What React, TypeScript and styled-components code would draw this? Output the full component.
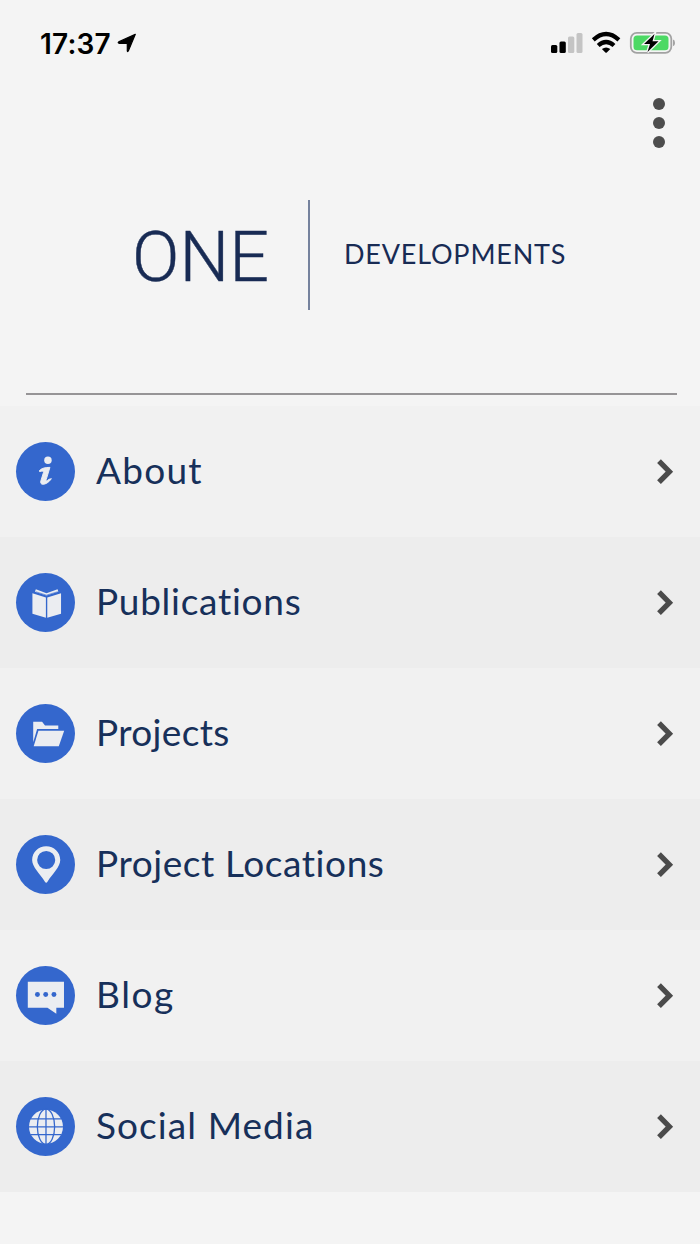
import React from "react";
import styled, { createGlobalStyle } from "styled-components";

const GlobalStyle = createGlobalStyle`
  * { box-sizing: border-box; }
  body { margin: 0; background: #f4f4f4; }
`;

const Screen = styled.div`
  width: 700px;
  height: 1244px;
  display: flex;
  flex-direction: column;
  background: #f4f4f4;
  overflow: hidden;
`;

const StatusBar = styled.header`
  height: 86px;
  padding: 0 24px 0 40px;
  display: flex;
  align-items: center;
  justify-content: space-between;
`;

const StatusGroup = styled.div`
  display: flex;
  align-items: center;
`;

const Clock = styled.span`
  font: 600 28px/32px Inter, sans-serif;
  letter-spacing: 0.2px;
  color: #000;
  margin: 1px 6px 0 0;
`;

const Toolbar = styled.div`
  height: 74px;
  padding: 12px 35px 0 0;
  display: flex;
  justify-content: flex-end;
`;

const MenuButton = styled.button`
  width: 12px;
  height: 50px;
  padding: 0;
  border: 0;
  background: none;
  display: flex;
  flex-direction: column;
  justify-content: space-between;
`;

const Dot = styled.span`
  width: 12px;
  height: 12px;
  border-radius: 50%;
  background: #4d4d4d;
`;

const Brand = styled.div`
  height: 233px;
  padding: 40px 0 0 132px;
  display: flex;
  align-items: flex-start;
  color: #182b54;
`;

const BrandName = styled.h1`
  margin: 0;
  width: 176px;
  font: 300 70px/114px Roboto, sans-serif;
  letter-spacing: 0;
  -webkit-text-stroke: 0.4px #182b54;
`;

const BrandRule = styled.span`
  width: 2px;
  height: 110px;
  margin-right: 34px;
  background: #75829d;
`;

const BrandSub = styled.span`
  font: 400 27px/108px Lato, sans-serif;
  letter-spacing: 0.8px;
  white-space: nowrap;
`;

const Divider = styled.hr`
  width: 651px;
  height: 2px;
  margin: 0 0 11px 26px;
  border: 0;
  flex: none;
  background: #969496;
`;

const List = styled.nav`
  display: flex;
  flex-direction: column;
`;

const Row = styled.a`
  height: 131px;
  padding: 0 26px 0 15.5px;
  display: flex;
  align-items: center;
  background: #f1f1f1;
  &:nth-child(even) { background: #ededed; }
`;

const Badge = styled.span`
  width: 59px;
  height: 59px;
  margin-right: 21.5px;
  flex: none;
  border-radius: 50%;
  background: #3467cd;
  display: flex;
`;

const Label = styled.span<{ $spacing: number }>`
  flex: 1;
  padding-bottom: 4px;
  font: 400 37px/46px Lato, sans-serif;
  letter-spacing: ${(p) => p.$spacing}px;
  color: #17305a;
  white-space: nowrap;
`;

const ink = "#ebedf1";
const blue = "#3467cd";

const InfoGlyph = () => (
  <svg width="59" height="59" viewBox="0 0 60 60" fill={ink}>
    <circle cx="32.500" cy="18.500" r="3.800" />
    <path stroke={ink} strokeWidth="1" strokeLinejoin="round" d="M23.500 29.500C26 26.500 30 25.800 34.500 25.800L30.700 38.200C30.200 40 31.200 40 33.500 38L36 37.300C33.500 41 30 43 27.500 43C25.200 43 24.800 41.500 25.300 39.500L28 30.800C28.300 29.300 27 29.500 24 30Z" />
  </svg>
);

const BookGlyph = () => (
  <svg width="59" height="59" viewBox="0 0 60 60" fill={ink}>
    <path d="M16.700 20.500L30.400 24.800V45.500L16.700 41.500Z M31.800 24.800L45.800 20.500V41.500L31.800 45.500Z" />
    <path d="M20.200 16.600L31 20.700L42.300 16.600L43 19L31 23L19.200 19Z" />
    <path d="M20 19L31 22.500L42.500 19" stroke={blue} strokeWidth=".6" fill="none" />
  </svg>
);

const FolderGlyph = () => (
  <svg width="59" height="59" viewBox="0 0 60 60" fill={ink}>
    <path d="M17.500 18H26.500L29.500 21.800H43V25.500H21.500L17.500 39Z" />
    <path d="M22.800 27.200H49L43.500 43H18Z" />
  </svg>
);

const PinGlyph = () => (
  <svg width="59" height="59" viewBox="0 0 60 60">
    <path fill={ink} fillRule="evenodd" d="M30.700 11.500C38.600 11.500 45 17.500 45 25.500C45 32.500 37.500 39 32 47.500Q30.700 49.500 29.400 47.500C24 39 16.400 32.500 16.400 25.500C16.400 17.500 22.800 11.500 30.700 11.500ZM30.700 16.200A9.200 9.200 0 1 0 30.700 34.600A9.200 9.200 0 1 0 30.700 16.200Z" />
  </svg>
);

const ChatGlyph = () => (
  <svg width="59" height="59" viewBox="0 0 60 60">
    <path fill={ink} d="M12 16H48.800V42.500H41V48.500L32 42.500H12Z" />
    <g fill={blue}>
      <circle cx="21.800" cy="29" r="2.500" />
      <circle cx="30.200" cy="29" r="2.500" />
      <circle cx="38.600" cy="29" r="2.500" />
    </g>
  </svg>
);

const GlobeGlyph = () => (
  <svg width="59" height="59" viewBox="0 0 60 60">
    <circle cx="30.500" cy="30.300" r="17.300" fill={ink} />
    <g fill="none" stroke={blue} strokeWidth="1.300">
      <path d="M30.500 12V48M15 22.300H46M12 30.300H49M15 38.300H46" />
      <ellipse cx="30.500" cy="30.300" rx="8.800" ry="18" />
    </g>
  </svg>
);

const Chevron = () => (
  <svg width="18" height="26" viewBox="0 0 18 26">
    <path d="M3 2.200L13.400 12.700L3 23.200" fill="none" stroke="#4b4b4b" strokeWidth="5.300" />
  </svg>
);

const LocationArrow = () => (
  <svg width="20" height="20" viewBox="0 0 20 20">
    <path d="M18.300 1.300L11.300 18Q10.500 19.200 10.300 17.800V10.300H2Q.5 9.700 1.700 8.900Z" fill="#000" stroke="#000" strokeWidth="1.200" strokeLinejoin="round" />
  </svg>
);

const StatusIcons = () => (
  <svg width="126" height="26" viewBox="0 0 126 26">
    <rect x="1" y="15" width="6.300" height="8" rx="1.500" />
    <rect x="9.500" y="11.500" width="6.300" height="11.500" rx="1.500" />
    <rect x="18" y="6.500" width="6.300" height="16.500" rx="1.500" fill="#c4c4c4" />
    <rect x="26.500" y="3" width="6" height="20" rx="1.500" fill="#c4c4c4" />
    <g fill="none" stroke="#000" strokeWidth="4.200">
      <path d="M43.300 9.900Q56.100-1.800 68.900 9.900" />
      <path d="M48.200 15.500Q56.100 8.400 64 15.500" />
    </g>
    <path d="M51.900 19Q56.100 15.800 60.300 19L56.800 22.600Q56.100 23.100 55.400 22.600Z" />
    <rect x="80.800" y="2.800" width="40.500" height="20" rx="6" fill="none" stroke="#a2a2a2" strokeWidth="1.800" />
    <rect x="83.500" y="5.400" width="35" height="14.800" rx="3.500" fill="#4cd964" />
    <path d="M123 9.500Q125 9.800 125 12.800T123 16Z" fill="#a2a2a2" />
    <path d="M104.500 4L94 14H100L97.500 22L108.500 11.300H102.500Z" fill="#000" stroke="#f4f4f4" strokeWidth="2.600" paintOrder="stroke" />
  </svg>
);

const items = [
  { label: "About", icon: <InfoGlyph />, spacing: 1.25 },
  { label: "Publications", icon: <BookGlyph />, spacing: 0.73 },
  { label: "Projects", icon: <FolderGlyph />, spacing: 0.35 },
  { label: "Project Locations", icon: <PinGlyph />, spacing: 0.58 },
  { label: "Blog", icon: <ChatGlyph />, spacing: 1.6 },
  { label: "Social Media", icon: <GlobeGlyph />, spacing: 1.08 },
];

export default function App() {
  return (
    <Screen>
      <GlobalStyle />
      <StatusBar>
        <StatusGroup>
          <Clock>17:37</Clock>
          <LocationArrow />
        </StatusGroup>
        <StatusIcons />
      </StatusBar>
      <Toolbar>
        <MenuButton aria-label="Menu">
          <Dot />
          <Dot />
          <Dot />
        </MenuButton>
      </Toolbar>
      <Brand>
        <BrandName>ONE</BrandName>
        <BrandRule />
        <BrandSub>DEVELOPMENTS</BrandSub>
      </Brand>
      <Divider />
      <List>
        {items.map((item) => (
          <Row key={item.label}>
            <Badge>{item.icon}</Badge>
            <Label $spacing={item.spacing}>{item.label}</Label>
            <Chevron />
          </Row>
        ))}
      </List>
    </Screen>
  );
}
